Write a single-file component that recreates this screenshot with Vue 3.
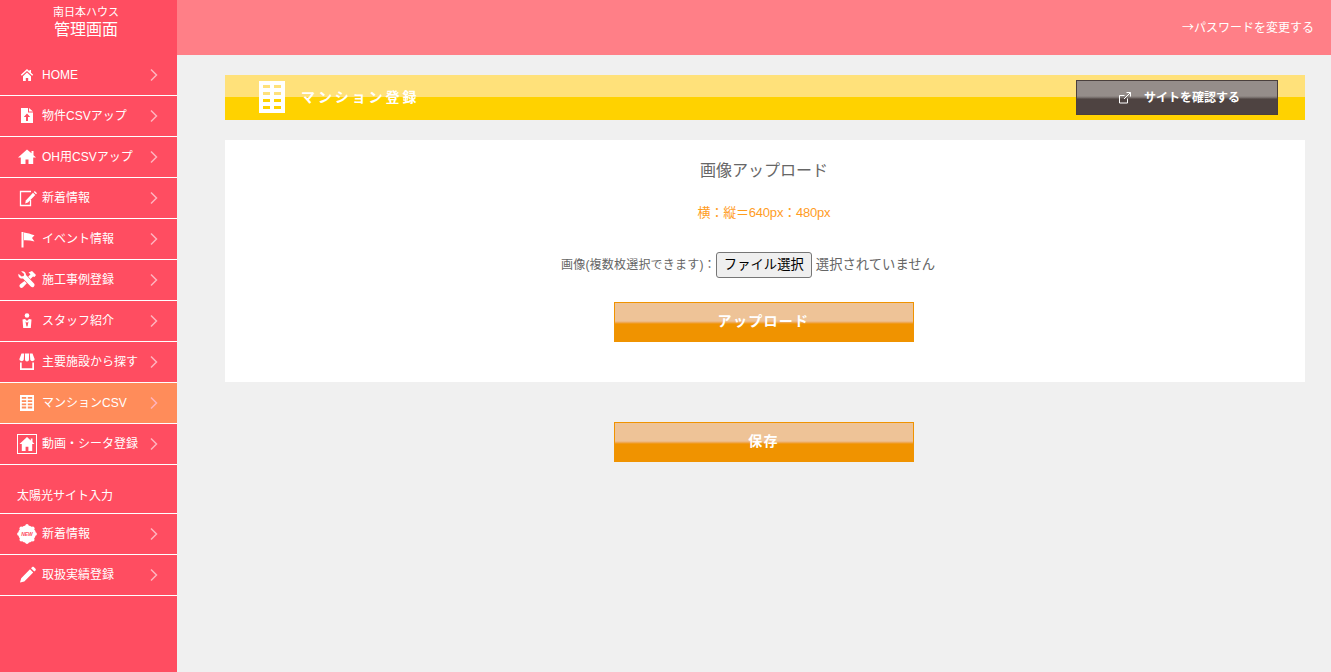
<script setup>
const items = [
  { label: 'HOME', icon: 'home' },
  { label: '物件CSVアップ', icon: 'file' },
  { label: 'OH用CSVアップ', icon: 'house' },
  { label: '新着情報', icon: 'edit' },
  { label: 'イベント情報', icon: 'flag' },
  { label: '施工事例登録', icon: 'tools' },
  { label: 'スタッフ紹介', icon: 'staff' },
  { label: '主要施設から探す', icon: 'shop' },
  { label: 'マンションCSV', icon: 'building', active: true },
  { label: '動画・シータ登録', icon: 'boxhouse' },
]
const solar = [
  { label: '新着情報', icon: 'new' },
  { label: '取扱実績登録', icon: 'pencil' },
]
</script>

<template>
  <div class="page">
    <aside class="side">
      <div class="brand">
        <div class="brand-sub">南日本ハウス</div>
        <div class="brand-main">管理画面</div>
      </div>
      <nav>
        <a v-for="it in items" :key="it.label" class="nav" :class="{ active: it.active }">
          <span class="ico"><svg width="22" height="22" viewBox="0 0 22 22" fill="#fff">
            <template v-if="it.icon === 'home'"><path d="M11 5 4.800 10.800l1 1L11 7l5.200 4.800 1-1-2.200-2V6h-1.600v1.300z"/><path d="M7 12.200 11 8.500l4 3.700V17h-2.800v-3H9.800v3H7z"/></template>
            <template v-else-if="it.icon === 'file'"><path fill-rule="evenodd" d="M5 3h7v4.500h5V18H5zM11 8.500l-3.200 3.600H10V16h2v-3.900h2.200zM13 3l4 3.500h-4z"/></template>
            <template v-else-if="it.icon === 'house'"><path d="M11 3.500 2 11.500h2.800V18h4.700v-4.500h3V18h4.700v-6.500H20L17.500 9.200V5h-2v2.300z"/></template>
            <template v-else-if="it.icon === 'edit'"><path fill="none" stroke="#fff" stroke-width="1.300" d="M14.500 13v5.500H4.500V4.500h10.500"/><path d="M9.800 13.500 17 5.800l2.300 2.200-7.300 7.600-2.800.8z"/><path d="M17.800 5l1-1 2.200 2.200-1 1z"/></template>
            <template v-else-if="it.icon === 'flag'"><path d="M5.500 4h2v15.500h-2zM8 4.500c3 .5 7 1.500 10.500 2.800l-2.500 2.700 2.500 3.500c-3.500-1-7-1.500-10.500-1.300z"/></template>
            <template v-else-if="it.icon === 'tools'"><path d="M2.500 4.800 5.600 7.500 7.700 7l.5-2.100L5.200 2.500C7.700 1.700 10 3.400 10 6l8 8.500c1 1 .5 2.500-.2 3.200s-2 .9-3-.2L7 9.500c-2.800.7-5.300-1.800-4.500-4.700z"/><path d="M12.500 3.500 16 2l4 4-1.500 2-1.500-.5-2.500 2.500-2.300-2.300 2.300-2.400zM8.500 12l2.300 2.300-3.800 4c-1 1-2.300.8-3-.1s-.8-2 .2-2.900z"/></template>
            <template v-else-if="it.icon === 'staff'"><circle cx="11" cy="5.500" r="2.300"/><path d="M6.500 9.500 9 9l2 2 2-2 2.500.5-.7 8.500H7.200z M9.500 11.500 10.400 16l.6.800.6-.8.900-4.500-1.500 1.200z" fill-rule="evenodd"/></template>
            <template v-else-if="it.icon === 'shop'"><path d="M5.500 2.500h2.700L7.700 9a2.400 2.400 0 0 1-4.400-.8zM9 2.500h4V8.500a2 2 0 0 1-4 0zM13.800 2.500h2.700l2.200 5.700a2.400 2.400 0 0 1-4.400.8z"/><path d="M4 11.500h1.700v5.800h10.600v-5.800H18V19H4z"/></template>
            <template v-else-if="it.icon === 'building'"><path fill-rule="evenodd" d="M4 3h14v16H4zM5.800 5v1.800h4.400V5zM11.800 5v1.800h4.400V5zM5.800 8.200V10h4.400V8.200zM11.800 8.200V10h4.400V8.200zM5.800 11.400v1.800h4.400v-1.800zM11.800 11.400v1.800h4.400v-1.800zM5.800 14.600v2h4.400v-2zM11.800 14.600v2h4.400v-2z"/></template>
            <template v-else-if="it.icon === 'boxhouse'"><rect x="1.500" y="1.500" width="19" height="19" fill="none" stroke="#fff"/><path d="M11 4 3.500 11h2.300v7h3.800v-4.300h2.800V18h3.800v-7h2.300l-2-2V5.500h-1.700v1.900z"/></template>
          </svg></span>
          <span class="lbl">{{ it.label }}</span>
          <svg class="chev" width="8" height="14" viewBox="0 0 8 14"><path d="M1 1.500l5.500 5.500L1 12.500" fill="none" stroke="#ffb3bd" stroke-width="1.500"/></svg>
        </a>
        <div class="solar">太陽光サイト入力</div>
        <a v-for="it in solar" :key="it.icon" class="nav">
          <span class="ico"><svg width="22" height="22" viewBox="0 0 22 22" fill="#fff">
            <template v-if="it.icon === 'new'"><circle cx="11" cy="11" r="8.700"/><g><circle cx="11" cy="2.800" r="1.700"/><circle cx="16.800" cy="5.200" r="1.700"/><circle cx="19.200" cy="11" r="1.700"/><circle cx="16.800" cy="16.800" r="1.700"/><circle cx="11" cy="19.200" r="1.700"/><circle cx="5.200" cy="16.800" r="1.700"/><circle cx="2.800" cy="11" r="1.700"/><circle cx="5.200" cy="5.200" r="1.700"/></g><text x="11" y="13" text-anchor="middle" class="newtxt">NEW</text></template>
            <template v-else><path d="M4 18.500l1.200-4.300L14 5.300l3.200 3.200L8.300 17.400zM15 4.300l1.200-1.200c.5-.5 1.100-.5 1.600 0l1.700 1.700c.5.500.5 1.100 0 1.600L18.300 7.500z"/></template>
          </svg></span>
          <span class="lbl">{{ it.label }}</span>
          <svg class="chev" width="8" height="14" viewBox="0 0 8 14"><path d="M1 1.500l5.500 5.500L1 12.500" fill="none" stroke="#ffb3bd" stroke-width="1.500"/></svg>
        </a>
      </nav>
    </aside>

    <div class="right">
      <header class="top"><a class="pw"><span class="arrow">→</span>パスワードを変更する</a></header>
      <main class="main">
        <div class="titlebar">
          <svg class="tb-ico" width="26" height="32" viewBox="0 0 26 32" fill="#fff"><path fill-rule="evenodd" d="M0 0h26v32H0zM4 4v3h7V4zM15 4v3h7V4zM4 11v3h7v-3zM15 11v3h7v-3zM4 18v3h7v-3zM15 18v3h7v-3zM4 25v3h7v-3zM15 25v3h7v-3z"/></svg>
          <h1 class="tb-title">マンション登録</h1>
          <a class="site">
            <svg width="14" height="14" viewBox="0 0 14 14" fill="none" stroke="#fff"><path d="M9.500 7.500v4.500h-8V4.500h5"/><path d="M6 8l6.500-6.500M8.500 1.500h4v4"/></svg>
            <span>サイトを確認する</span>
          </a>
        </div>

        <section class="panel">
          <h2 class="p-title">画像アップロード</h2>
          <p class="p-note">横：縦＝640px：480px</p>
          <div class="file-row">
            <span class="f-label">画像(複数枚選択できます)：</span>
            <button class="file-btn">ファイル選択</button>
            <span class="f-none">選択されていません</span>
          </div>
          <button class="grad up">アップロード</button>
        </section>

        <div class="save-wrap"><button class="grad">保存</button></div>
      </main>
    </div>
  </div>
</template>

<style>
html, body { margin: 0; background: #f0f0f0; }
</style>

<style scoped>
.page {
  display: flex;
  min-height: 672px;
  font-family: "Liberation Sans", "Noto Sans CJK JP", sans-serif;
  color: #666;
  background: #f0f0f0;
}
.side { width: 177px; flex: none; background: #ff4d61; color: #fff; }
.brand { height: 54px; text-align: center; box-sizing: border-box; padding: 4px 5px 0 0; }
.brand-sub { font-size: 11px; line-height: 16px; }
.brand-main { font-size: 16px; line-height: 19px; }
.nav {
  display: flex;
  align-items: center;
  height: 40px;
  border-bottom: 1px solid #fff;
  font-size: 12px;
  padding-left: 16px;
}
.nav:first-child { height: 41px; }
.active { background: #ff8c5a; }
.ico { width: 22px; height: 22px; flex: none; margin-right: 4px; display: flex; }
.lbl { flex: 1; white-space: nowrap; line-height: 16px; margin-bottom: 1px; }
.nav:first-child .lbl { margin-bottom: 0; }
.chev { margin-right: 19px; flex: none; }
.solar {
  height: 49px;
  box-sizing: border-box;
  border-bottom: 1px solid #fff;
  padding: 22px 0 0 17px;
  font-size: 12px;
  line-height: 18px;
}
.newtxt { font-size: 5px; font-weight: 700; font-style: italic; fill: #ff4d61; font-family: "Liberation Sans", sans-serif; }
.right { flex: 1; min-width: 0; }
.top {
  height: 55px;
  background: #ff7f87;
  display: flex;
  align-items: center;
  justify-content: flex-end;
  padding: 0 17px 3px 0;
  box-sizing: border-box;
}
.pw { color: #fff; font-size: 12px; }
.arrow { font-family: "Noto Sans CJK JP", sans-serif; }
.main { padding: 20px 26px 0 48px; }
.titlebar {
  height: 45px;
  display: flex;
  align-items: center;
  background: linear-gradient(#ffe17a 0, #ffe17a 22px, #ffd200 22px);
  padding-left: 34px;
}
.tb-ico { flex: none; margin-bottom: 2px; }
.tb-title {
  margin: 0 0 4px 16px;
  color: #fff;
  font-size: 14px;
  font-weight: 700;
  letter-spacing: 2.900px;
  flex: 1;
}
.site {
  width: 202px;
  height: 35px;
  margin-right: 27px;
  padding-left: 4px;
  box-sizing: border-box;
  border: 1px solid #4a3f3d;
  background: linear-gradient(#958d8a 0, #958d8a 15px, #6f6664 17px, #4e4341 18px);
  color: #fff;
  font-size: 12px;
  font-weight: 700;
  display: flex;
  align-items: center;
  justify-content: center;
  gap: 12px;
}
.site span { margin-bottom: 2px; }
.panel {
  margin-top: 20px;
  height: 242px;
  box-sizing: border-box;
  background: #fff;
  text-align: center;
  padding: 19px 2px 0 0;
  display: flex;
  flex-direction: column;
  align-items: center;
}
.p-title { margin: 0; font-size: 16px; font-weight: 400; line-height: 24px; color: #666; }
.p-note { margin: 21px 0 0; font-size: 13px; line-height: 18px; color: #ff9d1f; letter-spacing: -.2px; }
.file-row {
  margin: 30px 0 0;
  height: 26px;
  padding-right: 32px;
  display: flex;
  align-items: center;
  font-size: 12px;
  color: #666;
  white-space: nowrap;
}
.f-label { letter-spacing: .2px; margin-bottom: 3px; }
.f-none { font-size: 13.333px; margin: 0 0 3px 4px; }
.file-btn {
  font: inherit;
  font-size: 13.333px;
  color: #000;
  width: 96px;
  height: 26px;
  padding: 0 0 3px;
  border: 1px solid #767676;
  border-radius: 3px;
  background: #efefef;
}
.grad {
  width: 300px;
  height: 40px;
  box-sizing: border-box;
  border: 1px solid #f09300;
  border-bottom: 0;
  padding: 0 1px 5px 0;
  color: #fff;
  font: inherit;
  font-size: 14px;
  font-weight: 700;
  letter-spacing: 1.300px;
  background: linear-gradient(#eec397 0, #eec397 18px, #eeb070 19px, #f09300 21px);
}
.up { padding-bottom: 6px; margin-top: 24px; }
.save-wrap { display: flex; justify-content: center; padding: 40px 2px 0 0; }
</style>
